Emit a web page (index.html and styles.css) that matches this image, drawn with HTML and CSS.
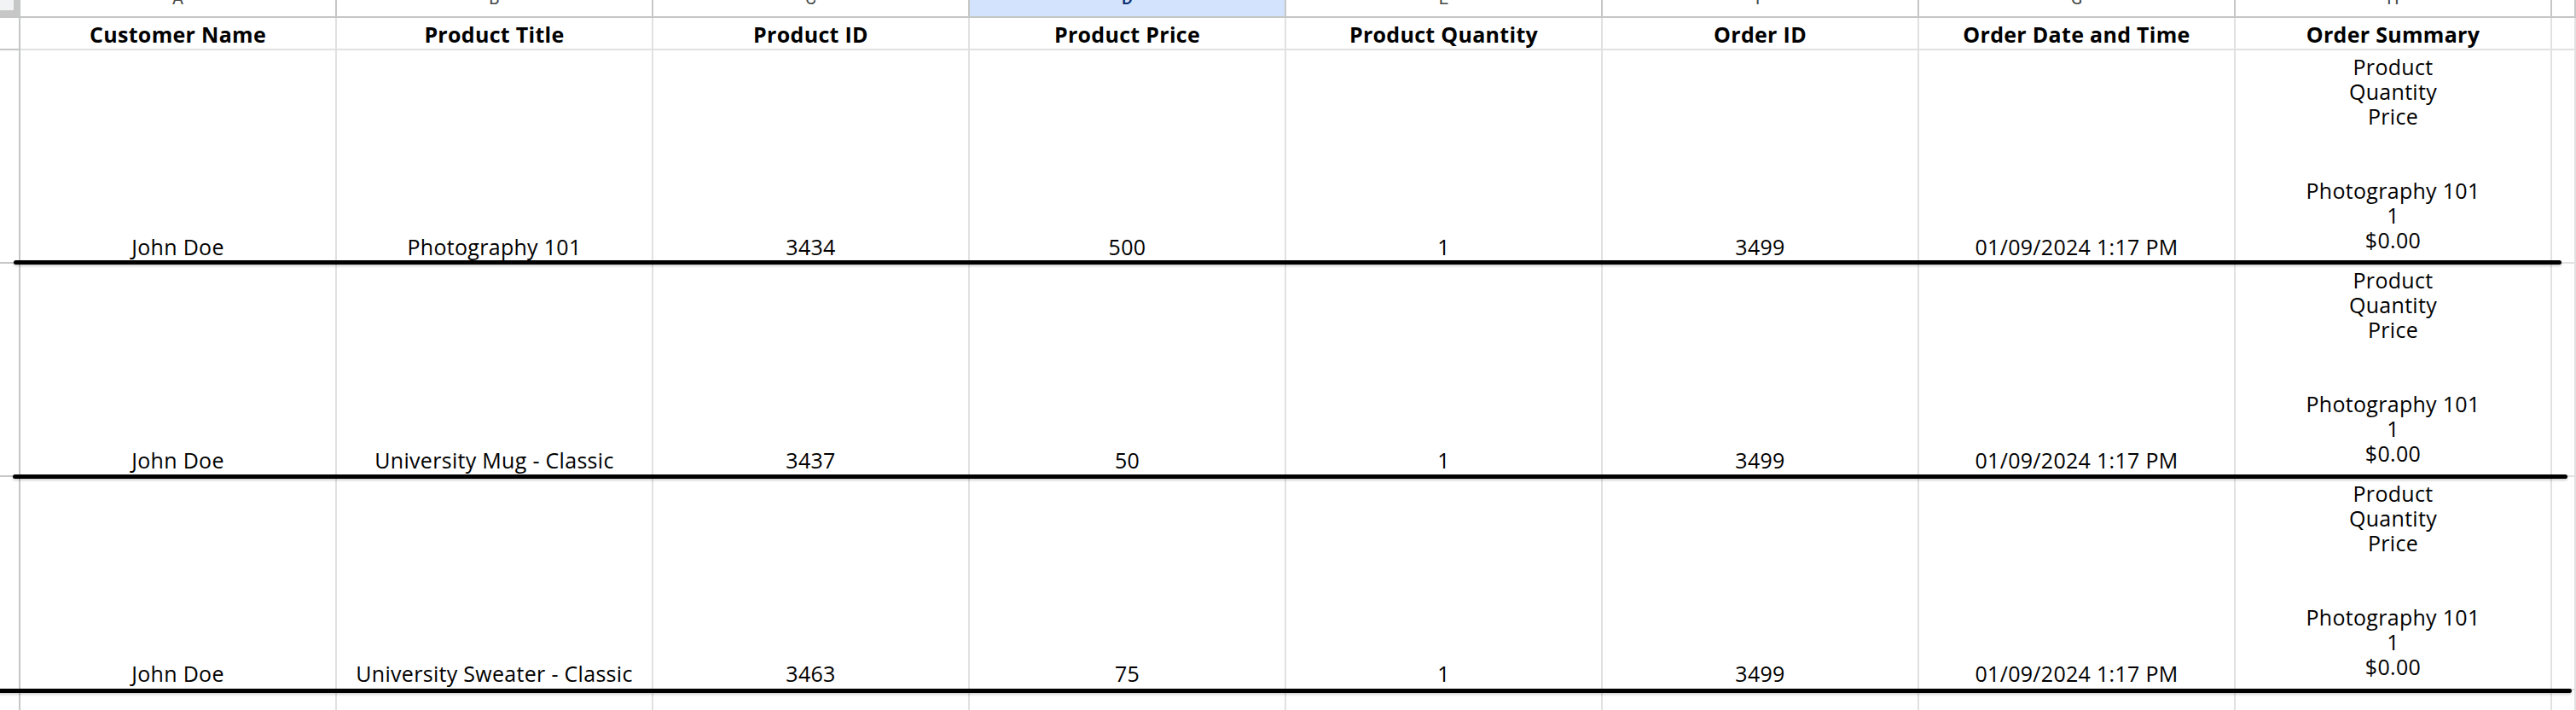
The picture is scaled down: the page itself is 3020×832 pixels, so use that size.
FILE: index.html
```html
<!DOCTYPE html>
<html lang="en">
<head>
<meta charset="utf-8">
<title>Orders sheet</title>
<link rel="stylesheet" href="styles.css">
</head>
<body>
<div class="sheet">
  <div class="grid">
    <div class="corner"><span class="corner-box"></span></div>
    <div class="colhead"><span>A</span></div>
    <div class="colhead"><span>B</span></div>
    <div class="colhead"><span>C</span></div>
    <div class="colhead sel"><span>D</span></div>
    <div class="colhead"><span>E</span></div>
    <div class="colhead"><span>F</span></div>
    <div class="colhead"><span>G</span></div>
    <div class="colhead"><span>H</span></div>
    <div class="colhead"></div>

    <div class="rowhead"></div>
    <div class="cell th">Customer Name</div>
    <div class="cell th">Product Title</div>
    <div class="cell th">Product ID</div>
    <div class="cell th">Product Price</div>
    <div class="cell th">Product Quantity</div>
    <div class="cell th">Order ID</div>
    <div class="cell th">Order Date and Time</div>
    <div class="cell th">Order Summary</div>
    <div class="cell"></div>

    <div class="rowhead"></div>
    <div class="cell">John Doe</div>
    <div class="cell">Photography 101</div>
    <div class="cell">3434</div>
    <div class="cell">500</div>
    <div class="cell">1</div>
    <div class="cell">3499</div>
    <div class="cell">01/09/2024 1:17 PM</div>
    <div class="cell summary">Product
Quantity
Price


Photography 101
1
$0.00</div>
    <div class="cell"></div>

    <div class="rowhead"></div>
    <div class="cell">John Doe</div>
    <div class="cell">University Mug - Classic</div>
    <div class="cell">3437</div>
    <div class="cell">50</div>
    <div class="cell">1</div>
    <div class="cell">3499</div>
    <div class="cell">01/09/2024 1:17 PM</div>
    <div class="cell summary">Product
Quantity
Price


Photography 101
1
$0.00</div>
    <div class="cell"></div>

    <div class="rowhead"></div>
    <div class="cell">John Doe</div>
    <div class="cell">University Sweater - Classic</div>
    <div class="cell">3463</div>
    <div class="cell">75</div>
    <div class="cell">1</div>
    <div class="cell">3499</div>
    <div class="cell">01/09/2024 1:17 PM</div>
    <div class="cell summary">Product
Quantity
Price


Photography 101
1
$0.00</div>
    <div class="cell"></div>

    <div class="rowhead"></div>
    <div class="cell"></div>
    <div class="cell"></div>
    <div class="cell"></div>
    <div class="cell"></div>
    <div class="cell"></div>
    <div class="cell"></div>
    <div class="cell"></div>
    <div class="cell"></div>
    <div class="cell"></div>
  </div>

  <div class="stroke stroke-1"></div>
  <div class="stroke stroke-2"></div>
  <div class="stroke stroke-3"></div>
</div>
</body>
</html>
```

FILE: styles.css
```css
html, body {
  margin: 0;
  padding: 0;
  background: #ffffff;
}

body {
  width: 3020px;
  height: 832px;
  overflow: hidden;
  font-family: "Open Sans", "DejaVu Sans", sans-serif;
  color: #000000;
}

.sheet {
  position: relative;
  width: 3020px;
  height: 832px;
  overflow: hidden;
}

.grid {
  display: grid;
  grid-template-columns: 24px repeat(8, 371px) 1fr;
  grid-template-rows: 21px 38px 250px 250px 250px 40px;
}

.corner {
  background: #c7c7c7;
  border-right: 2px solid #c4c7c5;
  border-bottom: 2px solid #c4c7c5;
  box-sizing: border-box;
}

.corner-box {
  display: block;
  width: 16px;
  height: 12px;
  background: #f1f3f4;
}

.colhead {
  box-sizing: border-box;
  border-right: 2px solid #c4c7c5;
  border-bottom: 2px solid #c4c7c5;
  background: #ffffff;
  overflow: hidden;
  display: flex;
  justify-content: center;
  align-items: flex-start;
  font-family: Roboto, "Open Sans", sans-serif;
  font-size: 20px;
  line-height: 20px;
  color: #444746;
}

.colhead span {
  margin-top: -12px;
}

.colhead.sel {
  background: #d3e3fd;
  color: #0a2f6e;
  font-weight: 500;
}

.rowhead {
  box-sizing: border-box;
  border-right: 2px solid #c4c7c5;
  border-bottom: 2px solid #c4c7c5;
  background: #ffffff;
}

.cell {
  box-sizing: border-box;
  border-right: 2px solid #e1e1e1;
  border-bottom: 2px solid #e1e1e1;
  display: flex;
  flex-direction: column;
  justify-content: flex-end;
  align-items: center;
  text-align: center;
  padding: 0 4px 3px;
  font-size: 25px;
  line-height: 29px;
  letter-spacing: 0.3px;
  white-space: nowrap;
  overflow: visible;
}

.cell.th {
  font-weight: 700;
  padding-bottom: 2px;
}

.cell.summary {
  justify-content: flex-start;
  padding-top: 5px;
  padding-bottom: 0;
  white-space: pre-line;
}

.stroke {
  position: absolute;
  height: 5px;
  background: #000000;
  border-radius: 3px;
  box-shadow: 0 2px 3px rgba(0, 0, 0, 0.18);
}

.stroke-1 {
  left: 16px;
  width: 2987px;
  top: 305px;
}

.stroke-2 {
  left: 15px;
  width: 2995px;
  top: 556px;
}

.stroke-3 {
  left: -2px;
  width: 3017px;
  top: 807px;
}
```
